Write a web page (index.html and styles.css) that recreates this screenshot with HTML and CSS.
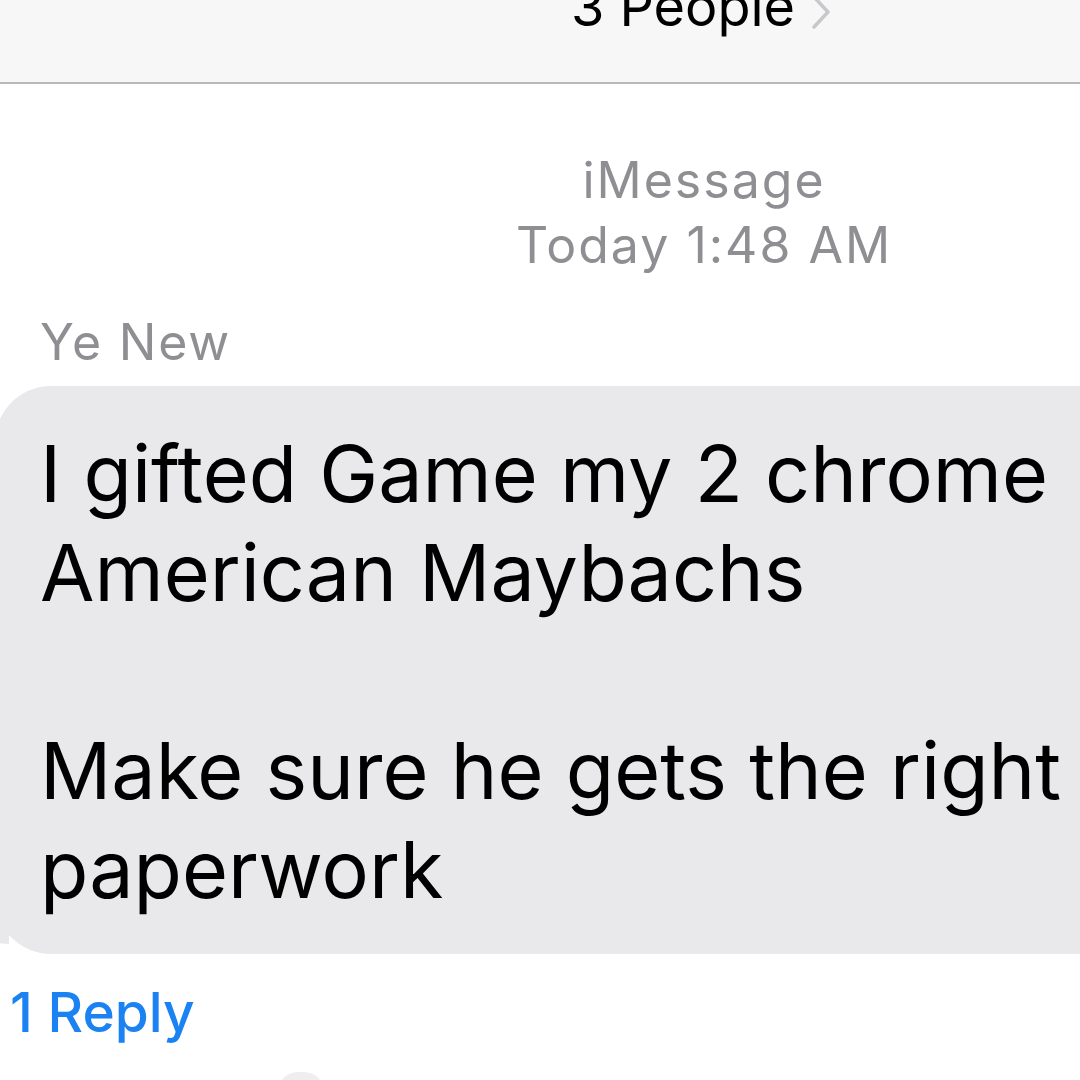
FILE: index.html
```html
<!DOCTYPE html>
<html lang="en">
<head>
  <meta charset="UTF-8" />
  <title>3 People</title>
  <link rel="stylesheet" href="styles.css">
</head>
<body>
  <header class="topbar">
    <div class="title">3 People <span class="chev"><svg width="20" height="34" viewBox="0 0 20 34"><path d="M3 2 L17 17 L3 32" fill="none" stroke="#c7c7cc" stroke-width="3.5" stroke-linecap="round" stroke-linejoin="round"/></svg></span></div>
  </header>

  <div class="thread">
    <div class="meta">
      <div>iMessage</div>
      <div>Today 1:48 AM</div>
    </div>

    <div class="sender">Ye New</div>
    <div class="bubble">
      <p>I gifted Game my 2 chrome<br>American Maybachs</p>
      <p>Make sure he gets the right<br>paperwork</p>
    </div>
    <div class="replies">1 Reply</div>
    <div class="next"></div>
  </div>
</body>
</html>
```

FILE: styles.css
```css
body {
  margin: 0;
  background: #fff;
  font-family: Inter, "Liberation Sans", sans-serif;
  color: #000;
  width: 1080px;
  height: 1080px;
  overflow: hidden;
}
.topbar {
  height: 82px;
  background: #f7f7f7;
  border-bottom: 2px solid #b9b9b9;
  display: flex;
  justify-content: center;
  align-items: flex-start;
  padding-left: 322px;
  overflow: hidden;
}
.title {
  font-size: 54px;
  line-height: 60px;
  margin-top: -23px;
  display: flex;
  align-items: center;
  gap: 16px;
}
.chev {
  display: flex;
  margin-top: 10px;
}
.thread {
  display: flex;
  flex-direction: column;
}
.meta {
  margin-top: 64px;
  padding-left: 328px;
  text-align: center;
  color: #8e8e93;
  font-size: 50px;
  line-height: 65px;
  letter-spacing: 2px;
}
.sender {
  margin-top: 32px;
  padding-left: 40px;
  color: #8e8e93;
  font-size: 50px;
  line-height: 65px;
  letter-spacing: 1.8px;
}
.bubble {
  position: relative;
  margin-top: 11px;
  margin-left: -5px;
  margin-right: -60px;
  background: #e9e9eb;
  border-radius: 56px;
  padding: 38px 0 35px 45px;
  font-size: 79px;
  line-height: 99px;
}
.bubble::before {
  content: "";
  position: absolute;
  left: -8px;
  bottom: 10px;
  width: 22px;
  height: 30px;
  background: #e9e9eb;
  border-radius: 0 0 0 22px / 0 0 0 10px;
}
.bubble p {
  margin: 0;
}
.bubble p + p {
  margin-top: 99px;
}
.replies {
  margin-top: 23px;
  padding-left: 10px;
  color: #1a82f2;
  font-size: 55px;
  line-height: 70px;
  font-weight: 500;
}
.next {
  margin-top: 25px;
  margin-left: 278px;
  width: 46px;
  height: 20px;
  border-radius: 23px 23px 0 0;
  background: #eeeeee;
}
```
